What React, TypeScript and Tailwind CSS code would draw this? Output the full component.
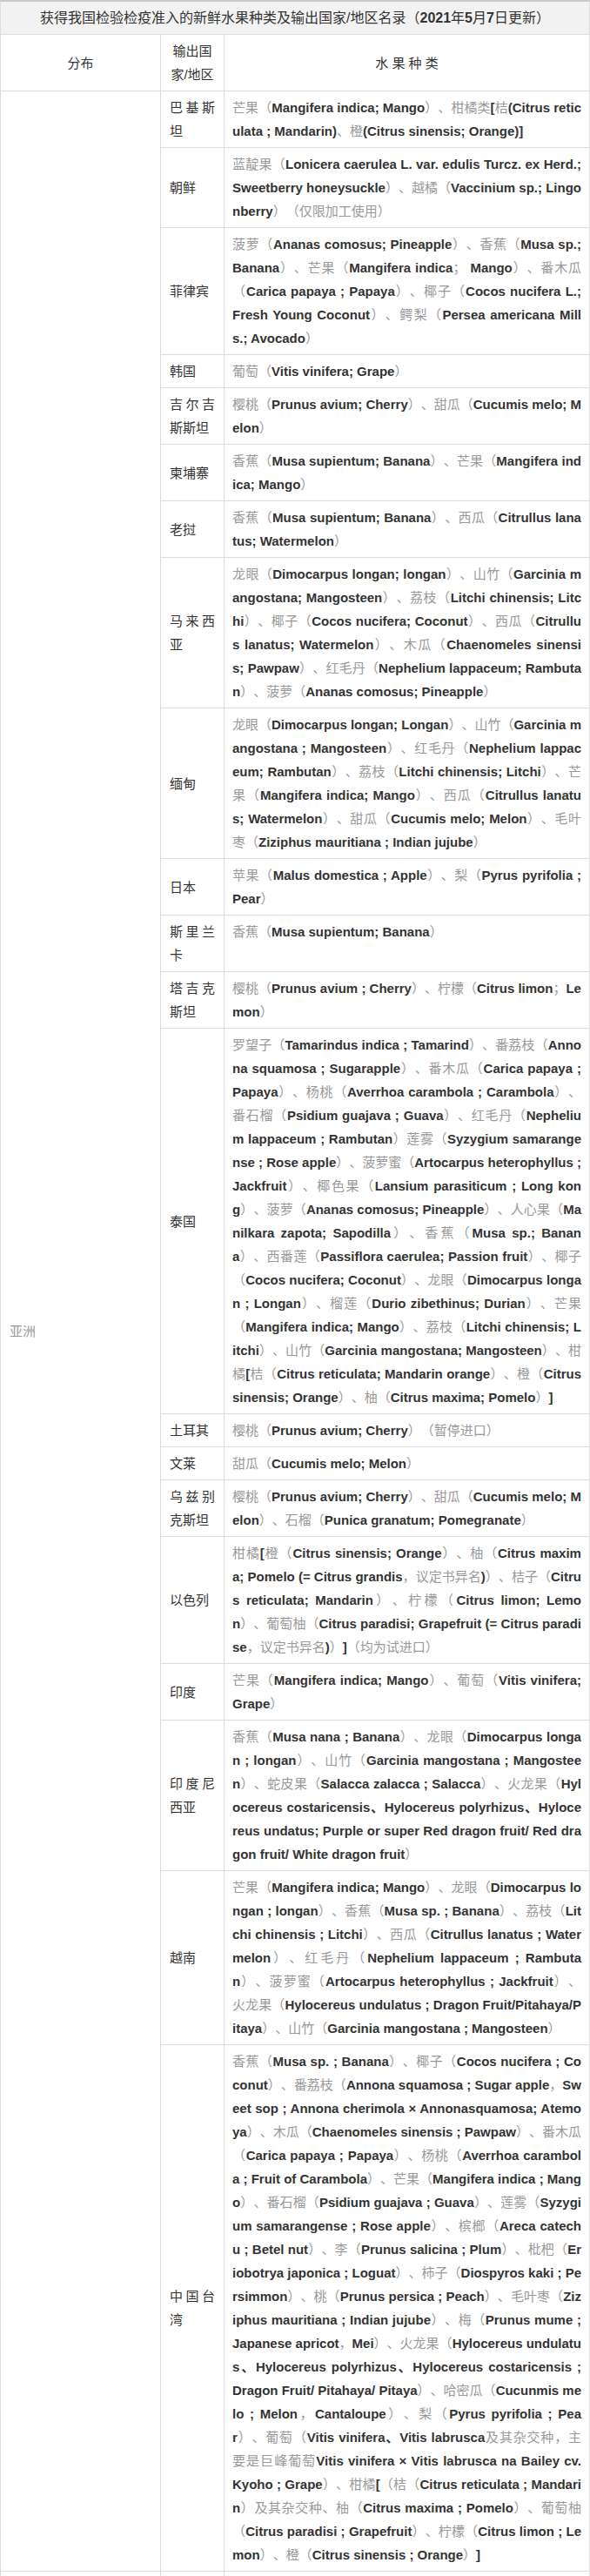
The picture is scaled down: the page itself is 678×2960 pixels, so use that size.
import React from 'react';

const ASIA: [string, string][] = [
  ['巴基斯坦', '芒果（Mangifera indica; Mango）、柑橘类[桔(Citrus reticulata ; Mandarin)、橙(Citrus sinensis; Orange)]'],
  ['朝鲜', '蓝靛果（Lonicera caerulea L. var. edulis Turcz. ex Herd.; Sweetberry honeysuckle）、越橘（Vaccinium sp.; Lingonberry）（仅限加工使用）'],
  ['菲律宾', '菠萝（Ananas comosus; Pineapple）、香蕉（Musa sp.; Banana）、芒果（Mangifera indica； Mango）、番木瓜（Carica papaya ; Papaya）、椰子（Cocos nucifera L.; Fresh Young Coconut）、鳄梨（Persea americana Mills.; Avocado）'],
  ['韩国', '葡萄（Vitis vinifera; Grape）'],
  ['吉尔吉斯斯坦', '樱桃（Prunus avium; Cherry）、甜瓜（Cucumis melo; Melon）'],
  ['柬埔寨', '香蕉（Musa supientum; Banana）、芒果（Mangifera indica; Mango）'],
  ['老挝', '香蕉（Musa supientum; Banana）、西瓜（Citrullus lanatus; Watermelon）'],
  ['马来西亚', '龙眼（Dimocarpus longan; longan）、山竹（Garcinia mangostana; Mangosteen）、荔枝（Litchi chinensis; Litchi）、椰子（Cocos nucifera; Coconut）、西瓜（Citrullus lanatus; Watermelon）、木瓜（Chaenomeles sinensis; Pawpaw）、红毛丹（Nephelium lappaceum; Rambutan）、菠萝（Ananas comosus; Pineapple）'],
  ['缅甸', '龙眼（Dimocarpus longan; Longan）、山竹（Garcinia mangostana ; Mangosteen）、红毛丹（Nephelium lappaceum; Rambutan）、荔枝（Litchi chinensis; Litchi）、芒果（Mangifera indica; Mango）、西瓜（Citrullus lanatus; Watermelon）、甜瓜（Cucumis melo; Melon）、毛叶枣（Ziziphus mauritiana ; Indian jujube）'],
  ['日本', '苹果（Malus domestica ; Apple）、梨（Pyrus pyrifolia ; Pear）'],
  ['斯里兰卡', '香蕉（Musa supientum; Banana）'],
  ['塔吉克斯坦', '樱桃（Prunus avium ; Cherry）、柠檬（Citrus limon；Lemon）'],
  ['泰国', '罗望子（Tamarindus indica ; Tamarind）、番荔枝（Annona squamosa ; Sugarapple）、番木瓜（Carica papaya ; Papaya）、杨桃（Averrhoa carambola ; Carambola）、番石榴（Psidium guajava ; Guava）、红毛丹（Nephelium lappaceum ; Rambutan）莲雾（Syzygium samarangense ; Rose apple）、菠萝蜜（Artocarpus heterophyllus ; Jackfruit）、椰色果（Lansium parasiticum ; Long kong）、菠萝（Ananas comosus; Pineapple）、人心果（Manilkara zapota; Sapodilla）、香蕉（Musa sp.; Banana）、西番莲（Passiflora caerulea; Passion fruit）、椰子（Cocos nucifera; Coconut）、龙眼（Dimocarpus longan ; Longan）、榴莲（Durio zibethinus; Durian）、芒果（Mangifera indica; Mango）、荔枝（Litchi chinensis; Litchi）、山竹（Garcinia mangostana; Mangosteen）、柑橘[桔（Citrus reticulata; Mandarin orange）、橙（Citrus sinensis; Orange）、柚（Citrus maxima; Pomelo）]'],
  ['土耳其', '樱桃（Prunus avium; Cherry）（暂停进口）'],
  ['文莱', '甜瓜（Cucumis melo; Melon）'],
  ['乌兹别克斯坦', '樱桃（Prunus avium; Cherry）、甜瓜（Cucumis melo; Melon）、石榴（Punica granatum; Pomegranate）'],
  ['以色列', '柑橘[橙（Citrus sinensis; Orange）、柚（Citrus maxima; Pomelo (= Citrus grandis，议定书异名)）、桔子（Citrus reticulata; Mandarin）、柠檬（Citrus limon; Lemon）、葡萄柚（Citrus paradisi; Grapefruit (= Citrus paradise，议定书异名)）]（均为试进口）'],
  ['印度', '芒果（Mangifera indica; Mango）、葡萄（Vitis vinifera; Grape）'],
  ['印度尼西亚', '香蕉（Musa nana ; Banana）、龙眼（Dimocarpus longan ; longan）、山竹（Garcinia mangostana ; Mangosteen）、蛇皮果（Salacca zalacca ; Salacca）、火龙果（Hylocereus costaricensis、Hylocereus polyrhizus、Hylocereus undatus; Purple or super Red dragon fruit/ Red dragon fruit/ White dragon fruit）'],
  ['越南', '芒果（Mangifera indica; Mango）、龙眼（Dimocarpus longan ; longan）、香蕉（Musa sp. ; Banana）、荔枝（Litchi chinensis ; Litchi）、西瓜（Citrullus lanatus ; Watermelon）、红毛丹（Nephelium lappaceum ; Rambutan）、菠萝蜜（Artocarpus heterophyllus ; Jackfruit）、火龙果（Hylocereus undulatus ; Dragon Fruit/Pitahaya/Pitaya）、山竹（Garcinia mangostana ; Mangosteen）'],
  ['中国台湾', '香蕉（Musa sp. ; Banana）、椰子（Cocos nucifera ; Coconut）、番荔枝（Annona squamosa ; Sugar apple，Sweet sop ; Annona cherimola × Annonasquamosa; Atemoya）、木瓜（Chaenomeles sinensis ; Pawpaw）、番木瓜（Carica papaya ; Papaya）、杨桃（Averrhoa carambola ; Fruit of Carambola）、芒果（Mangifera indica ; Mango）、番石榴（Psidium guajava ; Guava）、莲雾（Syzygium samarangense ; Rose apple）、槟榔（Areca catechu ; Betel nut）、李（Prunus salicina ; Plum）、枇杷（Eriobotrya japonica ; Loguat）、柿子（Diospyros kaki ; Persimmon）、桃（Prunus persica ; Peach）、毛叶枣（Ziziphus mauritiana ; Indian jujube）、梅（Prunus mume ; Japanese apricot，Mei）、火龙果（Hylocereus undulatus、Hylocereus polyrhizus、Hylocereus costaricensis ; Dragon Fruit/ Pitahaya/ Pitaya）、哈密瓜（Cucunmis melo ; Melon，Cantaloupe）、梨（Pyrus pyrifolia ; Pear）、葡萄（Vitis vinifera、Vitis labrusca及其杂交种，主要是巨峰葡萄Vitis vinifera × Vitis labrusca na Bailey cv. Kyoho ; Grape）、柑橘[（桔（Citrus reticulata ; Mandarin）及其杂交种、柚（Citrus maxima ; Pomelo）、葡萄柚（Citrus paradisi ; Grapefruit）、柠檬（Citrus limon ; Lemon）、橙（Citrus sinensis ; Orange）]'],
];

const AFRICA: [string, string][] = [
  ['埃及', '柑橘[橙（Citrus sinensis; Orange）、桔（Citrus reticulata; Mandarin）]、葡萄（Vitis vinifera; Grape）'],
];

// 中文（含全角标点）灰色常规，拉丁学名加粗深色
function isCjk(c: string) {
  return (c.codePointAt(0) ?? 0) >= 0x2e80;
}

function Rich({ text }: { text: string }) {
  const chars = Array.from(text);
  const parts: { cjk: boolean; s: string }[] = [];
  chars.forEach((c, i) => {
    let cjk = isCjk(c);
    if (c === '、' && /[A-Za-z]/.test(chars[i - 1] ?? '') && /[A-Za-z]/.test(chars[i + 1] ?? '')) cjk = false;
    const last = parts[parts.length - 1];
    if (last && last.cjk === cjk) last.s += c;
    else parts.push({ cjk, s: c });
  });
  return (
    <>
      {parts.map((p, i) =>
        p.cjk ? (
          <span key={i} className="text-[#999]">
            {p.s}
          </span>
        ) : (
          <span key={i} className="font-bold text-[#333]">
            {p.s}
          </span>
        )
      )}
    </>
  );
}

function Region({ name, rows }: { name: string; rows: [string, string][] }) {
  return (
    <div className="flex border-b border-[#ddd]">
      <div className="flex w-[184px] shrink-0 items-center border-r border-[#ddd] px-[10px] py-[5px] text-[#999]">
        {name}
      </div>
      <div className="flex min-w-0 flex-1 flex-col">
        {rows.map(([country, fruits]) => (
          <div key={country} className="flex border-b border-[#ddd] last:border-b-0">
            <div className="flex w-[73px] shrink-0 items-center border-r border-[#ddd] px-[10px] py-[5px]">
              <div className="w-full break-all text-justify text-[#333]">{country}</div>
            </div>
            <div className="min-w-0 flex-1 break-all py-[5px] pl-[9px] pr-[9px] text-justify">
              <Rich text={fruits} />
            </div>
          </div>
        ))}
      </div>
    </div>
  );
}

export default function App() {
  return (
    <div className="w-[678px] bg-white font-['Liberation_Sans','Noto_Sans_CJK_SC',sans-serif] text-[15px] leading-[27px] text-[#333] [text-spacing-trim:space-all]">
      <div className="border-x border-t-2 border-[#ddd] border-t-[#c8c8c8]">
        {/* 标题 */}
        <div className="border-b border-[#ddd] bg-[#f2f2f2] py-[5px] text-center text-[16px]">
          获得我国检验检疫准入的新鲜水果种类及输出国家/地区名录（<span className="font-bold">2021</span>年
          <span className="font-bold">5</span>月<span className="font-bold">7</span>日更新）
        </div>

        {/* 表头 */}
        <div className="flex border-b border-[#ddd]">
          <div className="flex w-[184px] shrink-0 items-center justify-center border-r border-[#ddd] py-[5px]">
            分布
          </div>
          <div className="w-[73px] shrink-0 border-r border-[#ddd] px-[10px] py-[5px] text-center">
            输出国家/地区
          </div>
          <div className="flex flex-1 items-center justify-center py-[5px]">水 果 种 类</div>
        </div>

        <Region name="亚洲" rows={ASIA} />
        <Region name="非洲" rows={AFRICA} />
      </div>
    </div>
  );
}
